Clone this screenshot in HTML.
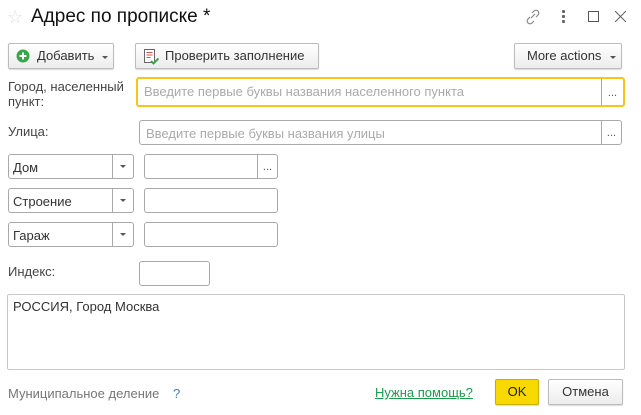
<!DOCTYPE html><html><head><meta charset="utf-8"><style>
body{margin:0;width:641px;height:415px;background:#fff;font-family:"Liberation Sans",Arial,sans-serif;font-size:13px;color:#333;position:relative;overflow:hidden}
.a{position:absolute}
.btn{position:absolute;box-sizing:border-box;border:1px solid #bcbcbc;border-radius:2px;background:linear-gradient(#fff,#ececec);box-shadow:0 1px 1px rgba(0,0,0,.15);color:#333;font-size:13px;line-height:24px}
.in{position:absolute;box-sizing:border-box;border:1px solid #a9a9a9;border-radius:3px;background:#fff}
.ph{color:#aaa;position:absolute;left:6px;top:5px;white-space:nowrap}
.dd{position:absolute;right:0;top:0;bottom:0;border-left:1px solid #a9a9a9;width:20px}
.dots{position:absolute;right:0;top:0;bottom:0;border-left:1px solid #a9a9a9;width:19px;text-align:center;font-size:11px;color:#555;line-height:28px}
.tri{position:absolute;width:0;height:0;border-left:3px solid transparent;border-right:3px solid transparent;border-top:3px solid #555}
.lbl{position:absolute;color:#444}
</style></head><body>
<div class="a" style="left:7px;top:7px;font-size:18px;color:#ddd">☆</div>
<div class="a" style="left:31px;top:6px;font-size:19px;color:#111">Адрес по прописке *</div>
<svg class="a" style="left:524px;top:8px" width="18" height="18" viewBox="0 0 18 18"><g fill="none" stroke="#888" stroke-width="1.2"><path d="M7 10 L11 6"/><path d="M8 5 L10 3 a2.5 2.5 0 0 1 4 4 L12 9"/><path d="M6 9 L4 11 a2.5 2.5 0 0 0 4 4 L10 13"/></g></svg>
<div class="a" style="left:562px;top:10px;width:3px;height:3px;background:#666;box-shadow:0 5px #666,0 10px #666;border-radius:1px"></div>
<div class="a" style="left:588px;top:11px;width:9px;height:9px;border:1px solid #555"></div>
<svg class="a" style="left:615px;top:11px" width="11" height="11"><path d="M0 0L11 11M11 0L0 11" stroke="#666" stroke-width="1.1"/></svg>

<div class="btn" style="left:8px;top:43px;width:106px;height:26px"><svg class="a" style="left:7px;top:5px" width="14" height="14"><circle cx="7" cy="7" r="6.5" fill="#3aa648"/><path d="M7 3.5v7M3.5 7h7" stroke="#fff" stroke-width="2"/></svg><span class="a" style="left:28px">Добавить</span><div class="tri" style="left:93px;top:12px"></div></div>
<div class="btn" style="left:135px;top:43px;width:184px;height:26px"><svg class="a" style="left:7px;top:4px" width="16" height="17"><rect x="1.5" y="1.5" width="10" height="13" fill="#fff" stroke="#666"/><path d="M3.5 4.5h6M3.5 7h6M3.5 9.5h4" stroke="#c55" stroke-width="1"/><path d="M8 13l2.5 2.5 5-5" stroke="#3aa648" stroke-width="2" fill="none"/></svg><span class="a" style="left:29px">Проверить заполнение</span></div>
<div class="btn" style="left:514px;top:43px;width:108px;height:26px"><span class="a" style="left:12px">More actions</span><div class="tri" style="left:95px;top:12px"></div></div>

<div class="lbl" style="left:8px;top:79px;line-height:15px">Город, населенный<br>пункт:</div>
<div class="in" style="left:136px;top:77px;width:489px;height:30px;border:2px solid #f5c518"><span class="ph" style="top:5px">Введите первые буквы названия населенного пункта</span><div class="dots" style="width:21px">...</div></div>
<div class="lbl" style="left:8px;top:124px">Улица:</div>
<div class="in" style="left:139px;top:120px;width:483px;height:25px"><span class="ph">Введите первые буквы названия улицы</span><div class="dots" style="line-height:24px">...</div></div>

<div class="in" style="left:8px;top:154px;width:126px;height:25px"><span class="a" style="left:4px;top:5px;color:#333">Дом</span><div class="dd"><div class="tri" style="left:7px;top:10px"></div></div></div>
<div class="in" style="left:144px;top:154px;width:134px;height:25px"><div class="dots" style="line-height:24px">...</div></div>
<div class="in" style="left:8px;top:188px;width:126px;height:25px"><span class="a" style="left:4px;top:5px;color:#333">Строение</span><div class="dd"><div class="tri" style="left:7px;top:10px"></div></div></div>
<div class="in" style="left:144px;top:188px;width:134px;height:25px"></div>
<div class="in" style="left:8px;top:222px;width:126px;height:25px"><span class="a" style="left:4px;top:5px;color:#333">Гараж</span><div class="dd"><div class="tri" style="left:7px;top:10px"></div></div></div>
<div class="in" style="left:144px;top:222px;width:134px;height:25px"></div>

<div class="lbl" style="left:8px;top:264px">Индекс:</div>
<div class="in" style="left:139px;top:261px;width:71px;height:25px"></div>
<div class="in" style="left:7px;top:294px;width:618px;height:76px;border-color:#c8c8c8;border-radius:2px"><span class="a" style="left:5px;top:4px;color:#333">РОССИЯ, Город Москва</span></div>

<div class="lbl" style="left:8px;top:386px;color:#777">Муниципальное деление</div>
<div class="a" style="left:173px;top:386px;color:#3b7fc4">?</div>
<div class="a" style="left:375px;top:385px;color:#1a9a4a;text-decoration:underline">Нужна помощь?</div>
<div class="btn" style="left:495px;top:379px;width:44px;height:26px;background:#f7d800;border-color:#c9b000;text-align:center;font-weight:normal;color:#222">OK</div>
<div class="btn" style="left:548px;top:379px;width:75px;height:26px;text-align:center">Отмена</div>
</body></html>
